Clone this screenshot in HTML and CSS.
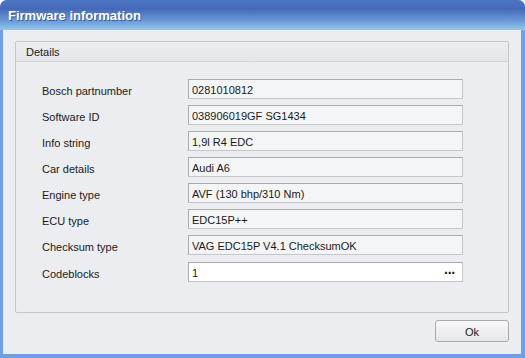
FILE: index.html
```html
<!DOCTYPE html>
<html lang="en">
<head>
  <meta charset="UTF-8">
  <title>Firmware information</title>
  <link rel="stylesheet" href="styles.css">
</head>
<body>
  <div class="window">
    <div class="title-bar">Firmware information</div>
    <div class="window-body">
      <div class="group">
        <div class="group-header">Details</div>
        <div class="group-content">
          <div class="row"><span class="label">Bosch partnumber</span><div class="field">0281010812</div></div>
          <div class="row"><span class="label">Software ID</span><div class="field">038906019GF SG1434</div></div>
          <div class="row"><span class="label">Info string</span><div class="field">1,9l R4 EDC</div></div>
          <div class="row"><span class="label">Car details</span><div class="field">Audi A6</div></div>
          <div class="row"><span class="label">Engine type</span><div class="field">AVF (130 bhp/310 Nm)</div></div>
          <div class="row"><span class="label">ECU type</span><div class="field">EDC15P++</div></div>
          <div class="row"><span class="label">Checksum type</span><div class="field">VAG EDC15P V4.1 ChecksumOK</div></div>
          <div class="row codeblocks"><span class="label">Codeblocks</span><div class="field editable"><span>1</span><span class="dots">&middot;&middot;&middot;</span></div></div>
        </div>
      </div>
      <div class="buttons">
        <button class="ok-button">Ok</button>
      </div>
    </div>
  </div>
</body>
</html>
```

FILE: styles.css
```css
body {
  margin: 0;
  font-family: 'Liberation Sans', Arial, sans-serif;
  font-size: 11px;
  color: #1a1a1a;
  background-color: #ffffff;
}

.window {
  width: 525px;
  height: 358px;
  box-sizing: border-box;
  display: flex;
  flex-direction: column;
  background-color: #6f9fe6;
  border-radius: 7px 7px 0 0;
  overflow: hidden;
}

.title-bar {
  height: 30px;
  flex-shrink: 0;
  box-sizing: border-box;
  padding: 8px 0 0 8px;
  font-family: 'Liberation Sans', Arial, sans-serif;
  font-weight: bold;
  font-size: 13px;
  color: #ffffff;
  text-shadow: 1px 1px 0 #3b5a9a;
  background: linear-gradient(to bottom, #4b75c4 0%, #4569b8 30%, #6b9bd8 70%, #94c6ee 100%);
}

.window-body {
  flex: 1;
  margin: 0 4px 4px 3px;
  background-color: #ecedf0;
  padding: 11px 12px 0 12px;
  display: flex;
  flex-direction: column;
}

.group {
  height: 272px;
  box-sizing: border-box;
  border: 1px solid #c5c6ca;
  border-radius: 2px;
  background-color: #ecedf0;
}

.group-header {
  height: 19px;
  line-height: 20px;
  padding-left: 10px;
  border-bottom: 1px solid #d4d5d9;
  background: linear-gradient(to bottom, #eceef1, #e4e5e8);
}

.group-content {
  padding: 17px 0 0 26px;
  display: flex;
  flex-direction: column;
  gap: 6px;
}

.row {
  display: flex;
  align-items: center;
  height: 20px;
}

.row.codeblocks {
  margin-top: 1px;
}

.label {
  width: 146px;
  padding-top: 4px;
}

.field {
  width: 275px;
  height: 20px;
  box-sizing: border-box;
  padding: 1px 3px 0 3px;
  line-height: 18px;
  border: 1px solid #a9abb1;
  border-right-color: #c4c6cb;
  border-bottom-color: #c4c6cb;
  background-color: #f4f5f7;
}

.field.editable {
  background-color: #ffffff;
  display: flex;
  justify-content: space-between;
}

.dots {
  font-weight: bold;
  font-size: 14px;
  letter-spacing: -1px;
  padding-right: 4px;
}

.buttons {
  display: flex;
  justify-content: flex-end;
  padding-top: 7px;
}

.ok-button {
  width: 74px;
  height: 22px;
  padding-top: 2px;
  font-family: 'Liberation Sans', Arial, sans-serif;
  font-size: 11px;
  color: #1a1a1a;
  border: 1px solid #a7a9ae;
  border-radius: 3px;
  background: linear-gradient(to bottom, #f7f7f9, #e6e7ea);
}
```
